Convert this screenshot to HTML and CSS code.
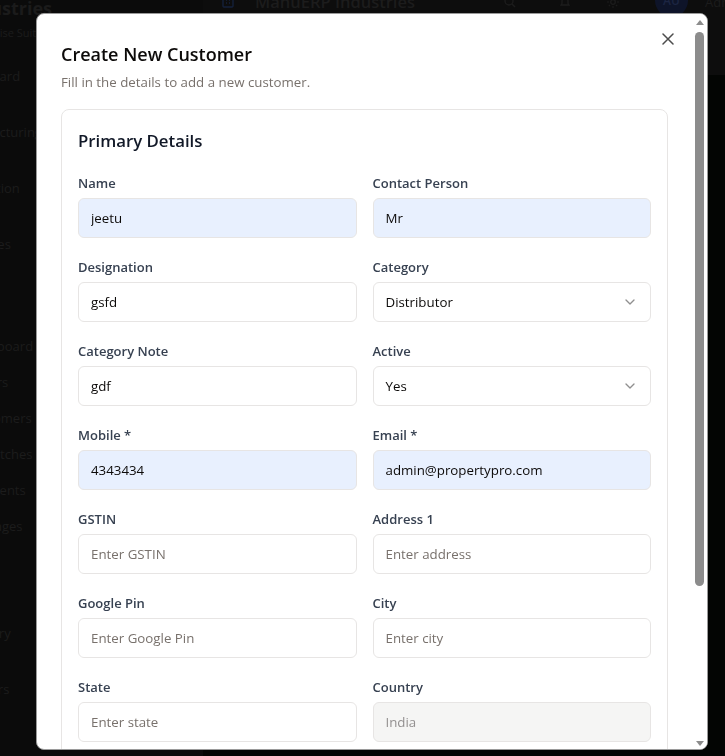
FILE: index.html
```html
<!DOCTYPE html>
<html lang="en">
<head>
<meta charset="utf-8">
<title>Create New Customer</title>
<link rel="stylesheet" href="styles.css">
</head>
<body>
<div class="app">
  <aside class="sidebar">
    <div class="brand">
      <div class="brand-name">ManuERP<br>Industries</div>
      <div class="brand-sub">Enterprise Suite</div>
    </div>
    <nav class="nav">
      <div class="nav-item">Dashboard</div>
      <div class="nav-item">Manufacturing</div>
      <div class="nav-item">Production</div>
      <div class="nav-item">Machines</div>
      <div class="nav-item sub first-sub">Dashboard</div>
      <div class="nav-item sub">Orders</div>
      <div class="nav-item sub">Customers</div>
      <div class="nav-item sub">Dispatches</div>
      <div class="nav-item sub">Payments</div>
      <div class="nav-item sub">Damages</div>
      <div class="nav-item after-sub">Reports</div>
      <div class="nav-item">Inventory</div>
      <div class="nav-item">Suppliers</div>
    </nav>
  </aside>
  <main class="main">
    <header class="topbar">
      <svg class="tb-logo" width="12" height="12" viewBox="0 0 12 12"><rect x="1" y="1" width="10" height="10" rx="1" fill="none" stroke="#15213b" stroke-width="1.4"/><path d="M4 4h1M7 4h1M4 7h1M7 7h1" stroke="#15213b" stroke-width="1.4"/></svg>
      <span class="tb-title">ManuERP Industries</span>
      <svg class="tb-icon tb-search" width="12" height="12" viewBox="0 0 12 12"><circle cx="5" cy="5" r="4" fill="none" stroke="#1c1c1c" stroke-width="1.4"/><path d="M8 8l3 3" stroke="#1c1c1c" stroke-width="1.4"/></svg>
      <svg class="tb-icon tb-bell" width="12" height="12" viewBox="0 0 12 12"><path d="M2 9h8L9 7.5V5a3 3 0 0 0-6 0v2.5z" fill="none" stroke="#1c1c1c" stroke-width="1.3"/></svg>
      <svg class="tb-icon tb-sun" width="12" height="12" viewBox="0 0 12 12"><circle cx="6" cy="6" r="2.3" fill="none" stroke="#1c1c1c" stroke-width="1.3"/><path d="M6 0v2M6 10v2M0 6h2M10 6h2M1.8 1.8l1.3 1.3M8.9 8.9l1.3 1.3M1.8 10.2l1.3-1.3M8.9 3.1l1.3-1.3" stroke="#1c1c1c" stroke-width="1.2"/></svg>
      <span class="tb-avatar">AU</span>
      <span class="tb-user">Admin User</span>
    </header>
    <div class="main-body"></div>
  </main>
</div>

<div class="modal" role="dialog" aria-labelledby="dlg-title">
  <div class="modal-body">
    <h2 class="modal-title" id="dlg-title">Create New Customer</h2>
    <p class="modal-desc">Fill in the details to add a new customer.</p>

    <section class="card">
      <h3 class="card-title">Primary Details</h3>
      <div class="form-grid">
        <div class="field">
          <label class="label">Name</label>
          <input class="input autofill" value="jeetu">
        </div>
        <div class="field">
          <label class="label">Contact Person</label>
          <input class="input autofill" value="Mr">
        </div>
        <div class="field">
          <label class="label">Designation</label>
          <input class="input" value="gsfd">
        </div>
        <div class="field">
          <label class="label">Category</label>
          <button class="input select" type="button"><span>Distributor</span><svg class="chev" width="16" height="16" viewBox="0 0 24 24"><path d="m6 9 6 6 6-6" fill="none" stroke="currentColor" stroke-width="2" stroke-linecap="round" stroke-linejoin="round"/></svg></button>
        </div>
        <div class="field">
          <label class="label">Category Note</label>
          <input class="input" value="gdf">
        </div>
        <div class="field">
          <label class="label">Active</label>
          <button class="input select" type="button"><span>Yes</span><svg class="chev" width="16" height="16" viewBox="0 0 24 24"><path d="m6 9 6 6 6-6" fill="none" stroke="currentColor" stroke-width="2" stroke-linecap="round" stroke-linejoin="round"/></svg></button>
        </div>
        <div class="field">
          <label class="label">Mobile *</label>
          <input class="input autofill" value="4343434">
        </div>
        <div class="field">
          <label class="label">Email *</label>
          <input class="input autofill" value="admin@propertypro.com">
        </div>
        <div class="field">
          <label class="label">GSTIN</label>
          <input class="input" placeholder="Enter GSTIN">
        </div>
        <div class="field">
          <label class="label">Address 1</label>
          <input class="input" placeholder="Enter address">
        </div>
        <div class="field">
          <label class="label">Google Pin</label>
          <input class="input" placeholder="Enter Google Pin">
        </div>
        <div class="field">
          <label class="label">City</label>
          <input class="input" placeholder="Enter city">
        </div>
        <div class="field">
          <label class="label">State</label>
          <input class="input" placeholder="Enter state">
        </div>
        <div class="field">
          <label class="label">Country</label>
          <input class="input disabled" value="India" disabled>
        </div>
        <div class="field">
          <label class="label">Pincode</label>
          <input class="input" placeholder="Enter pincode">
        </div>
      </div>
    </section>
  </div>

  <button class="close" type="button" aria-label="Close"><svg width="12" height="12" viewBox="0 0 12 12"><path d="M1 1l10 10M11 1 1 11" stroke="currentColor" stroke-width="1.5" stroke-linecap="round"/></svg></button>

  <div class="scrollbar" aria-hidden="true">
    <span class="sb-arrow sb-up"></span>
    <span class="sb-thumb"></span>
    <span class="sb-arrow sb-down"></span>
  </div>
</div>
</body>
</html>
```

FILE: styles.css
```css
html, body {
  margin: 0;
  height: 100%;
}
body {
  background: #0b0b0b;
  font-family: "Open Sans", "Noto Sans", sans-serif;
  overflow: hidden;
}

/* ---------- background app (behind the overlay) ---------- */
.app {
  display: flex;
  height: 756px;
  overflow: hidden;
}
.sidebar {
  flex: none;
  width: 250px;
  margin-left: -47px;
  background: #0b0b0b;
  color: #1c1c1c;
  font-size: 13px;
}
.brand {
  margin-top: -25px;
  padding-left: 8px;
}
.brand-name {
  font-size: 18px;
  font-weight: 700;
  line-height: 22px;
  color: #1b1b1b;
}
.brand-sub {
  margin-top: 6px;
  font-size: 11px;
  line-height: 16px;
}
.nav {
  margin-top: 7px;
  display: flex;
  flex-direction: column;
}
.nav-item {
  height: 56px;
  line-height: 56px;
  white-space: nowrap;
}
.nav-item.sub {
  height: 36px;
  line-height: 36px;
  padding-left: 13px;
}
.nav-item.first-sub {
  margin-top: 56px;
}
.nav-item.after-sub {
  margin-top: 5px;
}
.main {
  flex: 1;
  display: flex;
  flex-direction: column;
  min-width: 0;
  overflow: hidden;
}
.topbar {
  flex: none;
  height: 105px;
  margin-top: -30px;
  box-sizing: border-box;
  padding: 20px 0 0 19px;
  display: flex;
  align-items: flex-start;
  background: #0d0d0d;
  color: #1c1c1c;
  white-space: nowrap;
}
.topbar > * {
  flex: none;
}
.tb-logo {
  margin-top: 6px;
}
.tb-title {
  margin-left: 21px;
  font-size: 16.5px;
  font-weight: 600;
  line-height: 24px;
}
.tb-icon {
  margin-top: 6px;
}
.tb-search { margin-left: 89px; }
.tb-bell { margin-left: 43px; }
.tb-sun { margin-left: 36px; }
.tb-avatar {
  margin-left: 36px;
  margin-top: -6px;
  width: 33px;
  height: 33px;
  border-radius: 50%;
  background: #0e1429;
  color: #1c2542;
  font-size: 12px;
  font-weight: 600;
  line-height: 33px;
  text-align: center;
}
.tb-user {
  margin-left: 17px;
  font-size: 13px;
  line-height: 24px;
}
.main-body {
  flex: 1;
  background: #030503;
}

/* ---------- dialog ---------- */
.modal {
  position: fixed;
  left: 36px;
  top: 13px;
  width: 672px;
  height: 737px;
  box-sizing: border-box;
  background: #fff;
  border: 1px solid #9a9a9a;
  border-radius: 8px;
  overflow: hidden;
  color: #0c0a09;
}
.modal-body {
  height: 100%;
  box-sizing: border-box;
  padding: 24px 39px 24px 24px;
}
.modal-title {
  margin: 0;
  font-size: 18px;
  font-weight: 600;
  line-height: 32px;
  color: #0c0a09;
}
.modal-desc {
  margin: 2px 0 0;
  font-size: 13.3px;
  line-height: 20px;
  color: #78716c;
}
.close {
  position: absolute;
  top: 19px;
  right: 33px;
  width: 12px;
  height: 12px;
  padding: 0;
  border: 0;
  background: none;
  color: #4d4d4d;
  display: flex;
}

.card {
  margin-top: 17px;
  border: 1px solid #e7e5e4;
  border-radius: 8px;
  padding: 17px 16px 16px;
}
.card-title {
  margin: 0;
  font-size: 16.8px;
  font-weight: 600;
  line-height: 28px;
  color: #111827;
}
.form-grid {
  margin-top: 17px;
  display: grid;
  grid-template-columns: 1fr 1fr;
  column-gap: 16px;
  row-gap: 18px;
}
.label {
  display: block;
  padding-top: 1px;
  margin-bottom: 5px;
  font-size: 13px;
  font-weight: 600;
  line-height: 20px;
  color: #374151;
}
.input {
  display: block;
  width: 100%;
  height: 40px;
  box-sizing: border-box;
  margin: 0;
  padding: 0 12px;
  border: 1px solid #e7e5e4;
  border-radius: 6px;
  background: #fff;
  font-family: "Open Sans", "Noto Sans", sans-serif;
  font-size: 13.3px;
  color: #0c0a09;
  outline: none;
}
.input::placeholder {
  color: #78716c;
  opacity: 1;
}
.input.autofill {
  background: #e8f0fe;
}
.input.disabled {
  background: #f5f5f4;
  color: #939090;
  -webkit-text-fill-color: #939090;
}
.select {
  display: flex;
  align-items: center;
  justify-content: space-between;
  text-align: left;
  cursor: pointer;
}
.chev {
  color: #0c0a09;
  opacity: 0.45;
  flex: none;
}

/* ---------- scrollbar drawn over the dialog edge ---------- */
.scrollbar {
  position: absolute;
  top: 0;
  right: 0;
  bottom: 0;
  width: 15px;
  background: #fff;
  display: flex;
  flex-direction: column;
  align-items: center;
}
.sb-arrow {
  width: 0;
  height: 0;
  border-left: 4px solid transparent;
  border-right: 4px solid transparent;
}
.sb-up {
  margin-top: 6px;
  border-bottom: 5px solid #8c8c8c;
}
.sb-thumb {
  margin-top: 7px;
  width: 9px;
  height: 554px;
  border-radius: 5px;
  background: #8c8c8c;
}
.sb-down {
  margin-top: auto;
  margin-bottom: 3px;
  border-top: 5px solid #8c8c8c;
}
```
